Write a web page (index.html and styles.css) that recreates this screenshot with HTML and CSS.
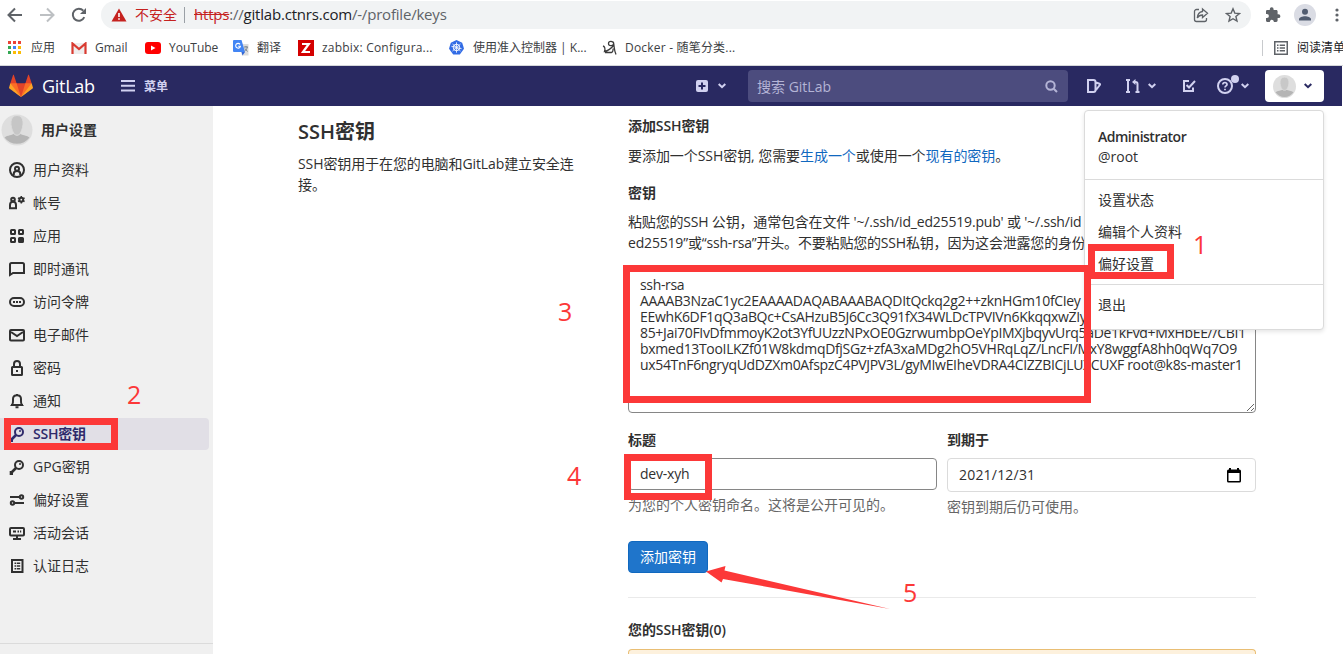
FILE: index.html
```
<!DOCTYPE html>
<html lang="zh-CN">
<head>
    <meta charset="UTF-8">
    <meta name="viewport" content="width=device-width, initial-scale=1.0">
    <title>SSH密钥 · 用户设置 · GitLab</title>
    <link rel="stylesheet" href="styles.css">
</head>
<body>
    <!-- Browser toolbar -->
    <div class="browser">
        <div class="toolbar">
            <svg class="tool-icon back" width="16" height="16" viewBox="0 0 16 16" fill="none" stroke="#5f6368" stroke-width="2"><path d="M15 8H2M8 1.5L1.5 8 8 14.5"/></svg>
            <svg class="tool-icon forward" width="16" height="16" viewBox="0 0 16 16" fill="none" stroke="#bdc0c3" stroke-width="2"><path d="M1 8h13M8 1.5L14.500 8 8 14.500"/></svg>
            <svg class="tool-icon reload" width="16" height="16" viewBox="0 0 16 16" fill="none" stroke="#5f6368" stroke-width="2"><path d="M13.300 10.200A6 6 0 1 1 12.300 3.700"/><path d="M15 1v6H9z" fill="#5f6368" stroke="none"/></svg>
            <div class="address">
                <svg width="16" height="14" viewBox="0 0 16 14"><path d="M8 .5L15.500 13.500H.5z" fill="#c5221f"/><path d="M7.200 5h1.600v4H7.200zM7.200 10.200h1.600v1.600H7.200z" fill="#fff"/></svg>
                <span class="insecure">不安全</span>
                <span class="address-sep"></span>
                <span class="url"><s>https</s>://<b>gitlab.ctnrs.com</b>/-/profile/keys</span>
                <svg class="share" width="16" height="16" viewBox="0 0 16 16" fill="none" stroke="#5f6368" stroke-width="1.300"><path d="M6 2.500H3.500a2 2 0 0 0-2 2v8a2 2 0 0 0 2 2h8a2 2 0 0 0 2-2V11"/><path d="M9.500 2l5 4.300-5 4.200V8C7 8 5.500 8.800 4.300 11c.2-3.500 2-6 5.200-6.500z"/></svg>
                <svg class="star" width="16" height="16" viewBox="0 0 16 16" fill="none" stroke="#5f6368" stroke-width="1.400"><path d="M8 1.800l1.800 4.300 4.700.4-3.600 3 1.100 4.600L8 11.700l-4 2.400 1.100-4.600-3.600-3 4.700-.4z"/></svg>
            </div>
            <svg class="puzzle" width="16" height="16" viewBox="0 0 16 16" fill="#5f6368"><path d="M13.500 7.300h-.9V4.400c0-.8-.6-1.400-1.400-1.400H8.600V2.200a1.900 1.900 0 0 0-3.800 0V3H2.200C1.500 3 1 3.600 1 4.400v2.500h.9a2 2 0 0 1 0 4H1v2.700c0 .8.500 1.400 1.200 1.400h2.700v-.8a2 2 0 0 1 3.900 0v.8h2.400c.8 0 1.400-.6 1.400-1.400v-2.500h.9a1.900 1.900 0 0 0 0-3.800z"/></svg>
            <svg class="profile" width="22" height="22" viewBox="0 0 22 22"><circle cx="11" cy="11" r="11" fill="#dadce4"/><circle cx="11" cy="7.800" r="3" fill="#515c70"/><path d="M5 16.500v-1.300c0-2 3.500-3 6-3s6 1 6 3v1.300z" fill="#515c70"/></svg>
            <svg class="kebab" width="4" height="16" viewBox="0 0 4 16" fill="#5f6368"><circle cx="2" cy="3" r="1.600"/><circle cx="2" cy="8" r="1.600"/><circle cx="2" cy="13" r="1.600"/></svg>
        </div>
        <div class="bookmarks">
            <span class="bookmark apps">
                <svg width="14" height="14" viewBox="0 0 14 14"><path fill="#ea4335" d="M0 0h3v3H0zM5 0h3v3H5zM10 0h3v3h-3z"/><path fill="#34a853" d="M0 5h3v3H0zM0 10h3v3H0z"/><path fill="#4285f4" d="M5 5h3v3H5z"/><path fill="#fbbc05" d="M10 5h3v3h-3zM5 10h3v3H5zM10 10h3v3h-3z"/></svg>
                应用
            </span>
            <span class="bookmark gmail">
                <svg width="16" height="12" viewBox="0 0 16 12"><path fill="#eee" d="M1 1h14v11H1z"/><path fill="none" stroke="#d93b31" stroke-width="2.200" d="M1.500 12V1.500L8 7l6.500-5.500V12"/></svg>
                Gmail
            </span>
            <span class="bookmark youtube">
                <svg width="16" height="12" viewBox="0 0 16 12"><rect width="16" height="12" rx="3" fill="#f00"/><path d="M6 3.500v5L10.500 6z" fill="#fff"/></svg>
                YouTube
            </span>
            <span class="bookmark translate">
                <svg width="16" height="16" viewBox="0 0 16 16"><path fill="#dcdcdc" d="M6 4h9.500v11.500H9z"/><path fill="#4285f4" d="M1 0h7.500L12 12H1a1 1 0 0 1-1-1V1a1 1 0 0 1 1-1z"/><path fill="#3367d6" d="M8.500 12H12l-2.500 3.500z"/><path fill="none" stroke="#fff" stroke-width="1.100" d="M7 4.300A2.400 2.400 0 1 0 7.400 6.300H5.200"/><path fill="none" stroke="#77838c" d="M11 7h4M13 6v1M14.300 7c-.3 2-1.300 3-2.600 4M12 8.500l2.500 3"/></svg>
                翻译
            </span>
            <span class="bookmark zabbix">
                <svg width="16" height="16" viewBox="0 0 16 16"><rect width="16" height="16" fill="#d40000"/><path d="M4 4h6.800L5 12h7" fill="none" stroke="#fff" stroke-width="2.200"/></svg>
                zabbix: Configura...
            </span>
            <span class="bookmark k8s">
                <svg width="15" height="15" viewBox="0 0 15 15"><path fill="#326ce5" d="M7.500 0l5.700 2.700L15 8.800 10.800 14.500H4.200L0 8.800l1.800-6.100z"/><g fill="none" stroke="#fff"><circle cx="7.500" cy="7.500" r="3.200"/><path stroke-width=".8" d="M7.500 2.300v10.400M2.400 6.300l10.200 2.400M3.500 11l8-7M3.500 4l8 7"/></g></svg>
                使用准入控制器 | K...
            </span>
            <span class="bookmark docker">
                <svg width="15" height="16" viewBox="0 0 15 16" fill="none" stroke="#3c3c3c" stroke-width="1.300"><path d="M1 6c1.800.5 2.500 3 1.500 5.500 3-.5 6-2 9.300-6.500M11.700 3.500C11.200.7 6.500.7 6.500 3.500s4.200 3 5.200.2c.6 3 .3 6.500 2.300 10.800M3 12.500h6.500c1 0 1.500-1.500 1.700-4"/></svg>
                Docker - 随笔分类...
            </span>
            <span class="reading-list">
                <svg width="14" height="14" viewBox="0 0 14 14" fill="none" stroke="#5f6368" stroke-width="1.500"><rect x=".75" y=".75" width="12.500" height="12.500"/><path d="M3 4.200h1.500M5.700 4.200H11M3 7h1.500M5.700 7H11M3 9.800h1.500M5.700 9.800H11"/></svg>
                阅读清单
            </span>
        </div>
    </div>

    <!-- GitLab navbar -->
    <header class="navbar">
        <svg class="logo" width="24" height="24" viewBox="0 0 36 36"><path fill="#e24329" d="M2 14l9.380 9v-9l-4-12.280c-.205-.632-1.176-.632-1.380 0z"/><path fill="#e24329" d="M34 14l-9.380 9v-9l4-12.280c.205-.632 1.176-.632 1.380 0z"/><path fill="#e24329" d="M18 34.380L3 14h30z"/><path fill="#fc6d26" d="M18 34.380L11.380 14H2l4 11zM18 34.380L24.620 14H34l-4 11z"/><path fill="#fca326" d="M2 14L.1 20.160c-.18.565 0 1.200.5 1.560l17.420 12.660zM34 14l1.900 6.160c.18.565 0 1.200-.5 1.560L18 34.380z"/></svg>
        <span class="brand">GitLab</span>
        <svg class="burger" width="14" height="12" viewBox="0 0 14 12" fill="#d1d1f0"><path d="M0 0h14v2H0zM0 4.700h14v2H0zM0 9.400h14v2H0z"/></svg>
        <span class="menu-label">菜单</span>
        <svg class="plus" width="12" height="12" viewBox="0 0 12 12"><rect width="12" height="12" rx="2" fill="#d1d1f0"/><path d="M6 2.500v7M2.500 6h7" stroke="#292961" stroke-width="2"/></svg>
        <svg class="chevron plus-chevron" width="8" height="6" viewBox="0 0 8 6"><path d="M.7 1L4 4.200 7.300 1"/></svg>
        <div class="search">
            <span>搜索 GitLab</span>
            <svg width="13" height="13" viewBox="0 0 13 13" fill="none" stroke="#b4b4d6" stroke-width="2"><circle cx="5.500" cy="5.500" r="4.200"/><path d="M8.700 8.700l3.300 3.300"/></svg>
        </div>
        <svg class="nav-icon issues" width="14" height="14" viewBox="0 0 14 14"><path d="M1 1h5.500a2 2 0 0 1 2 2v8a2 2 0 0 1-2 2H1zM9 3.500l3.500 1.200c.6.200.7.800.3 1.300L9 11"/></svg>
        <svg class="nav-icon merges" width="15" height="16" viewBox="0 0 15 16"><path d="M3 3v11M8 4h2.500a2 2 0 0 1 2 2v8"/><path d="M10.500 1L7 4l3.500 3z" fill="#d1d1f0" stroke="none"/><path d="M1 2h4M1 14h4M10.500 14h4"/></svg>
        <svg class="chevron merge-chevron" width="8" height="6" viewBox="0 0 8 6"><path d="M.7 1L4 4.200 7.300 1"/></svg>
        <svg class="nav-icon todos" width="14" height="14" viewBox="0 0 14 14"><path d="M7 2H2v10h9V8.500M4.500 6L7 8.500 13 2"/></svg>
        <div class="help">
            <svg class="nav-icon" width="16" height="16" viewBox="0 0 16 16"><circle cx="8" cy="8" r="7"/><path d="M5.800 6.500C5.800 3.700 10.300 4 10 6.600c-.2 1.400-2 1.300-2 3M8 10.800v1.500" stroke-width="1.700"/></svg>
            <span class="help-dot"></span>
        </div>
        <svg class="chevron help-chevron" width="8" height="6" viewBox="0 0 8 6"><path d="M.7 1L4 4.200 7.300 1"/></svg>
        <div class="user-toggle">
            <svg width="23" height="23" viewBox="0 0 32 32"><circle cx="16" cy="16" r="16" fill="#dedede"/><path d="M3.500 24c3-2.500 8-2 9.500-4h6c1.500 2 6.500 1.500 9.500 4a15 15 0 0 1-25 0z" fill="#b5b5b5"/><path d="M16 3c8 0 7 11 3.500 16.500-1.500 2.500-5.500 2.500-7 0C9 14 8 3 16 3z" fill="#c8c8c8" stroke="#dedede"/></svg>
            <svg class="chevron dark" width="8" height="6" viewBox="0 0 8 6"><path d="M.7 1L4 4.200 7.300 1"/></svg>
        </div>
        <div class="dropdown">
            <div class="dropdown-user">
                <strong>Administrator</strong>
                <span>@root</span>
            </div>
            <div class="dropdown-group">
                <a>设置状态</a>
                <a>编辑个人资料</a>
                <a>偏好设置</a>
            </div>
            <div class="dropdown-group last">
                <a>退出</a>
            </div>
        </div>
    </header>

    <div class="page">
        <!-- Settings sidebar -->
        <aside class="sidebar">
            <div class="sidebar-title">
                <svg width="32" height="32" viewBox="0 0 32 32"><circle cx="16" cy="16" r="15.500" fill="#dedede"/><path d="M3.500 23.500c3-2.500 8-2 9.500-4h6c1.500 2 6.500 1.500 9.500 4a15.500 15.500 0 0 1-25 0z" fill="#b5b5b5"/><path d="M16 1.500c8 0 7 11 3.500 17.500-1.500 3-5.500 3-7 0C9 12.500 8 1.500 16 1.500z" fill="#c6c6c6" stroke="#dedede"/></svg>
                <span>用户设置</span>
            </div>
            <ul class="menu">
                <li><svg viewBox="0 0 16 16"><circle cx="8" cy="8" r="7"/><circle cx="8" cy="6.700" r="2"/><path d="M4.800 13v-1.500c0-3.500 6.400-3.500 6.400 0V13"/></svg><span>用户资料</span></li>
                <li><svg viewBox="0 0 16 16"><circle cx="4" cy="4.500" r="1.800"/><path d="M1 13.200V10c0-4.500 6-4.500 6 0v3.200z"/><circle cx="12.300" cy="4.700" r="1.900"/><path stroke-width="1.500" d="M12.300 1v1.500M12.300 7v1.500M9 2.900l1.300.7M14.300 5.800l1.300.7M9 6.500l1.300-.7M14.300 3.600l1.300-.7"/></svg><span>帐号</span></li>
                <li><svg viewBox="0 0 16 16"><rect x="2" y="2" width="4" height="4" rx=".5"/><rect x="10" y="2" width="4" height="4" rx=".5"/><rect x="2" y="10" width="4" height="4" rx=".5"/><rect x="10" y="10" width="4" height="4" rx=".5" fill="#303030"/></svg><span>应用</span></li>
                <li><svg viewBox="0 0 16 16"><path d="M1 14V3.500A1.500 1.500 0 0 1 2.500 2h11A1.500 1.500 0 0 1 15 3.500V12H4z"/></svg><span>即时通讯</span></li>
                <li><svg viewBox="0 0 16 16"><rect x="1" y="4" width="14" height="8" rx="4"/><path d="M4 8h2M7 8h2M10 8h2"/></svg><span>访问令牌</span></li>
                <li><svg viewBox="0 0 16 16"><rect x="1" y="3" width="14" height="10.500" rx="1"/><path d="M2 5l6 4 6-4"/></svg><span>电子邮件</span></li>
                <li><svg viewBox="0 0 16 16"><rect x="3" y="7" width="10" height="8" rx=".5"/><path d="M5 7V4c0-4 6-4 6 0v3M7 11h2"/></svg><span>密码</span></li>
                <li><svg viewBox="0 0 16 16"><path d="M3 12c1.500-2 1-4 1-6 0-5 8-5 8 0 0 2-.5 4 1 6zM2 12h12M8 1v1M6.500 14.300h3"/></svg><span>通知</span></li>
                <li class="active"><svg viewBox="0 0 16 16"><circle cx="10" cy="6" r="4"/><path d="M7 9l-5 5M2 12v3h2" stroke-width="2.600"/><path d="M10 5h2" stroke-width="1.600"/></svg><span>SSH密钥</span></li>
                <li><svg viewBox="0 0 16 16"><circle cx="10" cy="6" r="4"/><path d="M7 9l-5 5M2 12v3h2" stroke-width="2.600"/><path d="M10 5h2" stroke-width="1.600"/></svg><span>GPG密钥</span></li>
                <li><svg viewBox="0 0 16 16"><path d="M1 5h9M6 11h9"/><circle cx="12.500" cy="5" r="1.700"/><circle cx="3.500" cy="11" r="1.700"/></svg><span>偏好设置</span></li>
                <li><svg viewBox="0 0 16 16"><rect x="1" y="3" width="14" height="7.500" rx="1"/><path d="M4 6.500h3M8.500 6.500H10M11 6.500h1.200M8 10v4M4 14h8"/></svg><span>活动会话</span></li>
                <li><svg viewBox="0 0 16 16"><rect x="3" y="2" width="10.500" height="12"/><path stroke-width="1.500" d="M5.500 5.200H7M7.700 5.200h3.500M5.500 8H7M7.700 8h3.500M5.500 10.800H7M7.700 10.800h3.500"/></svg><span>认证日志</span></li>
            </ul>
            <div class="sidebar-toggle"></div>
        </aside>

        <main class="content">
            <section class="intro">
                <h4>SSH密钥</h4>
                <p>SSH密钥用于在您的电脑和GitLab建立安全连接。</p>
            </section>
            <section class="settings">
                <h5>添加SSH密钥</h5>
                <p class="hint">要添加一个SSH密钥, 您需要<a>生成一个</a>或使用一个<a>现有的密钥</a>。</p>
                <label>密钥</label>
                <p class="key-hint">粘贴您的SSH 公钥，通常包含在文件 '~/.ssh/id_ed25519.pub' 或 '~/.ssh/id<br>ed25519”或“ssh-rsa”开头。不要粘贴您的SSH私钥，因为这会泄露您的身份</p>
                <textarea class="key" wrap="off" spellcheck="false">ssh-rsa
AAAAB3NzaC1yc2EAAAADAQABAAABAQDItQckq2g2++zknHGm10fCIey
EEwhK6DF1qQ3aBQc+CsAHzuB5J6Cc3Q91fX34WLDcTPVIVn6KkqqxwZIy
85+Jai70FIvDfmmoyK2ot3YfUUzzNPxOE0GzrwumbpOeYpIMXjbqyvUrq5aDe1kFvd+MxHbEE//CBI1
bxmed13TooILKZf01W8kdmqDfjSGz+zfA3xaMDg2hO5VHRqLqZ/LncFI/MxY8wggfA8hh0qWq7O9
ux54TnF6ngryqUdDZXm0AfspzC4PVJPV3L/gyMIwEIheVDRA4CIZZBICjLUXCUXF root@k8s-master1</textarea>
                <div class="fields">
                    <div class="field">
                        <label>标题</label>
                        <div class="input"><span>dev-xyh</span></div>
                        <p class="help-text">为您的个人密钥命名。这将是公开可见的。</p>
                    </div>
                    <div class="field">
                        <label>到期于</label>
                        <div class="input date">
                            <span>2021/12/31</span>
                            <svg width="14" height="15" viewBox="0 0 14 15"><path d="M2 0h2v1.500h6V0h2v1.500h.5A1.500 1.500 0 0 1 14 3v10a1.500 1.500 0 0 1-1.500 1.500h-11A1.500 1.500 0 0 1 0 13V3a1.500 1.500 0 0 1 1.500-1.500H2zM1.500 5v8h11V5z" fill-rule="evenodd"/></svg>
                        </div>
                        <p class="help-text">密钥到期后仍可使用。</p>
                    </div>
                </div>
                <button class="add-key">添加密钥</button>
                <hr>
                <h5 class="list-title">您的SSH密钥(0)</h5>
                <div class="alert"></div>
            </section>
        </main>
    </div>

    <!-- Step marks laid over the page -->
    <div class="marks">
        <div class="mark mark-1"></div>
        <div class="mark mark-2"></div>
        <div class="mark mark-3"></div>
        <div class="mark mark-4"></div>
        <svg class="arrow" width="184" height="46" viewBox="0 0 184 46"><path d="M0 6.500L19.500 1l-1 4.500L184 44 17 14l-1.500 3.500z" fill="#fc3838"/></svg>
        <span class="step step-1">1</span>
        <span class="step step-2">2</span>
        <span class="step step-3">3</span>
        <span class="step step-4">4</span>
        <span class="step step-5">5</span>
    </div>
</body>
</html>
```
FILE: styles.css
```
/* General styling */
* {
    box-sizing: border-box;
}
body {
    position: relative;
    height: 654px;
    margin: 0;
    overflow: hidden;
    font-family: "Open Sans", "Noto Sans CJK SC", sans-serif;
    font-size: 14px;
    line-height: 21px;
    color: #303030;
    background-color: #fff;
}
h4, h5, p, ul {
    margin: 0;
    padding: 0;
}
svg {
    display: block;
    flex: none;
}

/* Browser toolbar */
.browser {
    height: 66px;
    border-bottom: 1px solid #d5d7da;
    white-space: nowrap;
    overflow: hidden;
}
.toolbar {
    display: flex;
    align-items: center;
    height: 30px;
    padding-left: 7px;
}
.forward {
    margin-left: 16px;
}
.reload {
    margin-left: 16px;
}
.address {
    display: flex;
    align-items: center;
    width: 1150px;
    height: 28px;
    margin-left: 14px;
    padding: 0 10px;
    border-radius: 14px;
    background-color: #f1f3f4;
    font-size: 15px;
}
.insecure {
    margin-left: 8px;
    padding-bottom: 1px;
    font-size: 14px;
    color: #c5221f;
}
.address-sep {
    width: 1px;
    height: 16px;
    margin: 0 9px 0 7px;
    background-color: #9aa0a6;
}
.url {
    padding-bottom: 2px;
    color: #5f6368;
    letter-spacing: -0.2px;
}
.url s {
    color: #c5221f;
}
.url b {
    font-weight: normal;
    color: #202124;
}
.share {
    margin-left: auto;
}
.star {
    margin-left: 16px;
}
.puzzle {
    margin-left: 14px;
}
.profile {
    margin-left: 13px;
}
.kebab {
    margin-left: 19px;
}
.bookmarks {
    display: flex;
    align-items: center;
    height: 35px;
    padding-left: 8px;
    font-size: 12px;
    color: #3c4043;
}
.bookmark {
    display: flex;
    align-items: center;
    gap: 8px;
}
.apps {
    width: 63px;
    gap: 9px;
}
.gmail {
    width: 74px;
}
.youtube {
    width: 88px;
}
.translate {
    width: 65px;
}
.zabbix {
    width: 151px;
    letter-spacing: 0.2px;
}
.k8s {
    width: 153px;
    gap: 9px;
}
.docker {
    letter-spacing: 0.2px;
}
.reading-list {
    display: flex;
    align-items: center;
    gap: 9px;
    height: 16px;
    margin-left: auto;
    margin-right: -2px;
    padding-left: 11px;
    border-left: 1px solid #c8cacd;
    color: #202124;
}

/* Navbar */
.navbar {
    position: relative;
    display: flex;
    align-items: center;
    width: 1342px;
    height: 40px;
    padding-left: 9px;
    background-color: #292961;
    color: #d1d1f0;
}
.brand {
    width: 54px;
    margin-left: 9px;
    font-size: 18px;
    color: #fff;
    letter-spacing: -0.3px;
}
.burger {
    margin-left: 25px;
}
.menu-label {
    margin-left: 9px;
    font-size: 12px;
    font-weight: bold;
}
.plus {
    margin-left: auto;
}
.chevron {
    fill: none;
    stroke: #d1d1f0;
    stroke-width: 2;
}
.chevron.dark {
    stroke: #292961;
}
.plus-chevron {
    margin-left: 10px;
}
.search {
    display: flex;
    align-items: center;
    justify-content: space-between;
    width: 320px;
    height: 32px;
    margin-left: 22px;
    padding: 0 10px 0 9px;
    border-radius: 4px;
    background-color: #4c4c7e;
    color: #b4b4d6;
}
.nav-icon {
    fill: none;
    stroke: #d1d1f0;
    stroke-width: 2;
}
.issues {
    margin-left: 19px;
}
.merges {
    margin-left: 24px;
}
.merge-chevron {
    margin-left: 8px;
}
.todos {
    margin-left: 26px;
}
.help {
    position: relative;
    margin-left: 21px;
}
.help-dot {
    position: absolute;
    top: -3px;
    right: -6px;
    width: 8px;
    height: 8px;
    border-radius: 50%;
    background-color: #d1d1f0;
}
.help-chevron {
    margin-left: 8px;
}
.user-toggle {
    display: flex;
    align-items: center;
    gap: 8px;
    width: 59px;
    height: 32px;
    margin: 0 18px 0 16px;
    padding-left: 8px;
    border-radius: 4px;
    background-color: #fff;
}

/* User dropdown */
.dropdown {
    position: absolute;
    z-index: 2;
    top: 44px;
    right: 18px;
    width: 240px;
    height: 220px;
    border: 1px solid #dbdbdb;
    border-radius: 4px;
    background-color: #fff;
    box-shadow: 0 2px 4px rgba(0, 0, 0, 0.1);
    color: #303030;
}
.dropdown-user {
    display: flex;
    flex-direction: column;
    height: 69px;
    padding: 16px 13px 0;
    border-bottom: 1px solid #dbdbdb;
    line-height: 20px;
}
.dropdown-user strong {
    font-weight: 600;
    letter-spacing: -0.5px;
}
.dropdown-group {
    height: 105px;
    padding: 4px 13px;
    border-bottom: 1px solid #dbdbdb;
}
.dropdown-group a {
    display: block;
    height: 32px;
    line-height: 31px;
}
.dropdown-group.last {
    height: 44px;
    border-bottom: none;
}

/* Page layout */
.page {
    display: flex;
    height: 548px;
}
.sidebar {
    display: flex;
    flex-direction: column;
    width: 213px;
    background-color: #f0f0f0;
}
.sidebar-title {
    display: flex;
    align-items: center;
    gap: 8px;
    height: 48px;
    padding-left: 1px;
    font-weight: bold;
}
.sidebar-title span {
    padding-bottom: 2px;
}
.menu {
    list-style: none;
}
.menu li {
    display: flex;
    align-items: center;
    gap: 8px;
    width: 209px;
    height: 32px;
    margin-bottom: 1px;
    padding-left: 9px;
}
.menu span {
    padding-bottom: 2px;
}
.menu svg {
    width: 16px;
    height: 16px;
    fill: none;
    stroke: #303030;
    stroke-width: 2;
}
.menu .active {
    border-radius: 0 4px 4px 0;
    background-color: #e1dfe6;
    color: #2f2a6b;
}
.menu .active span {
    font-weight: 600;
    letter-spacing: -0.2px;
}
.menu .active svg {
    stroke: #2f2a6b;
}
.sidebar-toggle {
    height: 11px;
    margin-top: auto;
    border-top: 1px solid #dbdbdb;
}
.content {
    display: flex;
    padding-left: 85px;
}
.intro {
    width: 330px;
    padding: 12px 50px 0 0;
}
.intro h4 {
    margin-bottom: 7px;
    font-size: 20px;
    font-weight: 600;
    line-height: 28px;
    letter-spacing: 0;
}
.intro p {
    letter-spacing: -0.1px;
}
.settings {
    width: 628px;
    padding-top: 10px;
}
h5, label {
    display: block;
    font-size: 14px;
    font-weight: 600;
    line-height: 20px;
}
h5 {
    letter-spacing: -0.1px;
}
.settings a {
    color: #1068bf;
}
.hint {
    margin: 9px 0 17px;
    letter-spacing: -0.06px;
}
.key-hint {
    margin-top: 8px;
    white-space: nowrap;
    letter-spacing: -0.18px;
}

/* Key form */
.key {
    display: block;
    width: 628px;
    height: 145px;
    margin: 15px 0 17px;
    padding: 8px 11px;
    border: 1px solid #868686;
    border-radius: 4px;
    outline: none;
    overflow: hidden;
    font: inherit;
    line-height: 16px;
    color: #303030;
    letter-spacing: -0.33px;
}
.fields {
    display: grid;
    grid-template-columns: 309px 309px;
    gap: 10px;
    height: 111px;
}
.input {
    display: flex;
    align-items: center;
    height: 32px;
    margin-top: 8px;
    padding: 0 11px;
    border: 1px solid #868686;
    border-radius: 4px;
    letter-spacing: -0.2px;
}
.input.date {
    justify-content: space-between;
    height: 34px;
    padding-right: 14px;
    border-color: #dbdbdb;
    letter-spacing: 0.2px;
}
.input span {
    padding-bottom: 2px;
}
.help-text {
    margin-top: 4px;
    color: #666;
}
.add-key {
    display: block;
    width: 80px;
    height: 32px;
    padding: 0 0 2px;
    border: 1px solid #1068bf;
    border-radius: 4px;
    background-color: #1f75cb;
    color: #fff;
    font: inherit;
}
hr {
    height: 1px;
    margin: 24px 0 22px;
    border: none;
    background-color: #eaeaea;
}
.alert {
    height: 5px;
    margin-top: 9px;
    border: 1px solid #e9be74;
    border-bottom: none;
    border-radius: 4px 4px 0 0;
    background-color: #fdf1dd;
}

/* Step marks */
.marks {
    position: absolute;
    z-index: 3;
    inset: 0;
    pointer-events: none;
}
.mark {
    position: absolute;
    border: 7px solid #fc3838;
}
.mark-1 {
    left: 1088px;
    top: 244px;
    width: 86px;
    height: 35px;
}
.mark-2 {
    left: 4px;
    top: 418px;
    width: 114px;
    height: 32px;
}
.mark-3 {
    left: 623px;
    top: 265px;
    width: 468px;
    height: 138px;
}
.mark-4 {
    left: 624px;
    top: 454px;
    width: 88px;
    height: 46px;
}
.arrow {
    position: absolute;
    left: 706px;
    top: 565px;
}
.step {
    position: absolute;
    font-size: 25px;
    line-height: 30px;
    color: #fc3838;
}
.step-1 {
    left: 1193px;
    top: 229px;
}
.step-2 {
    left: 127px;
    top: 379px;
}
.step-3 {
    left: 558px;
    top: 296px;
}
.step-4 {
    left: 567px;
    top: 460px;
}
.step-5 {
    left: 903px;
    top: 577px;
}
```
